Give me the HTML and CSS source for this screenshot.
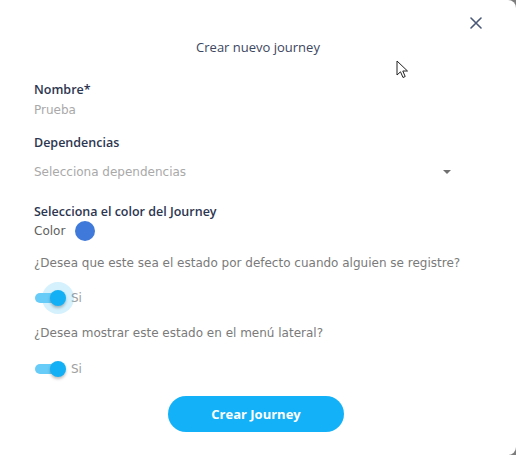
FILE: index.html
```html
<!DOCTYPE html>
<html lang="es">
<head>
<meta charset="utf-8">
<link rel="stylesheet" href="styles.css">
</head>
<body>
<div class="modal">
  <button class="close" aria-label="Cerrar">
    <svg width="12" height="12" viewBox="0 0 12 12"><path d="M1 1L11 11M11 1L1 11" stroke="#4a5878" stroke-width="1.6" stroke-linecap="round"/></svg>
  </button>
  <h1 class="title">Crear nuevo journey</h1>
  <form class="form">
    <div class="field">
      <div class="label">Nombre*</div>
      <div class="value">Prueba</div>
    </div>
    <div class="field field-dep">
      <div class="label">Dependencias</div>
      <div class="select">
        <span class="value">Selecciona dependencias</span>
        <span class="caret"></span>
      </div>
    </div>
    <div class="field field-color">
      <div class="label">Selecciona el color del Journey</div>
      <div class="color-row">
        <span class="color-text">Color</span>
        <span class="swatch"></span>
      </div>
    </div>
    <div class="question q1">¿Desea que este sea el estado por defecto cuando alguien se registre?</div>
    <div class="toggle-row">
      <span class="switch focused"><span class="track"></span><span class="thumb"></span></span>
      <span class="si">Si</span>
    </div>
    <div class="question q2">¿Desea mostrar este estado en el menú lateral?</div>
    <div class="toggle-row t2">
      <span class="switch"><span class="track"></span><span class="thumb"></span></span>
      <span class="si">Si</span>
    </div>
    <div class="actions">
      <button type="button" class="primary">Crear Journey</button>
    </div>
  </form>
  <svg class="cursor" width="14" height="20" viewBox="0 0 14 20"><path d="M1 1L1 15L4.5 11.8L7 17.5L9.2 16.5L6.8 11L11.5 11Z" fill="#fff" stroke="#222" stroke-width="1" stroke-linejoin="round"/></svg>
</div>
</body>
</html>
```
FILE: styles.css
```css
* { box-sizing: border-box; }
html, body { margin: 0; padding: 0; }
body {
  background: #7d7d7d;
  width: 516px;
  height: 455px;
  overflow: hidden;
  font-family: "DejaVu Sans", sans-serif;
}
.modal {
  position: relative;
  width: 516px;
  height: 455px;
  background: #fff;
  border-radius: 0 8px 8px 0;
  padding: 38px 34px 0 34px;
}
.close {
  position: absolute;
  top: 17px;
  right: 34px;
  width: 12px;
  height: 12px;
  padding: 0;
  border: 0;
  background: none;
  display: flex;
}
.title {
  margin: 0;
  text-align: center;
  font-family: "Open Sans", sans-serif;
  font-size: 13px;
  font-weight: 500;
  color: #3c4660;
  line-height: 18px;
}
.form { display: flex; flex-direction: column; margin-top: 26px; }
.label {
  font-family: "Open Sans", sans-serif;
  font-size: 12.5px;
  font-weight: 600;
  color: #2c3650;
  line-height: 16px;
}
.value {
  font-size: 12px;
  color: #a9a9a9;
  line-height: 16px;
  margin-top: 4px;
}
.field-dep { margin-top: 17px; }
.select {
  display: flex;
  align-items: center;
  justify-content: space-between;
  margin-top: 13px;
  padding-right: 31px;
}
.select .value { margin-top: 0; }
.caret {
  width: 0; height: 0;
  border-left: 4px solid transparent;
  border-right: 4px solid transparent;
  border-top: 4px solid #707070;
}
.field-color { margin-top: 24px; }
.color-row { display: flex; align-items: center; gap: 10px; margin-top: 1px; }
.color-text { font-size: 12px; color: #606060; line-height: 16px; }
.swatch { width: 20px; height: 20px; border-radius: 50%; background: #3f79da; }
.question {
  font-size: 12px;
  color: #7a7a7a;
  line-height: 16px;
}
.q1 { margin-top: 14px; }
.q2 { margin-top: 17px; }
.toggle-row { display: flex; align-items: center; height: 20px; margin-top: 17px; }
.t2 { margin-top: 18px; }
.switch { position: relative; width: 34px; height: 20px; margin-left: 1px; }
.track {
  position: absolute; left: 0; top: 5px;
  width: 28px; height: 10px; border-radius: 5px;
  background: #68ccf8;
}
.thumb {
  position: absolute; left: 15px; top: 2px;
  width: 16px; height: 16px; border-radius: 50%;
  background: #13b0f6;
  box-shadow: 0 2px 3px rgba(0,0,0,0.25);
}
.switch.focused::before {
  content: "";
  position: absolute; left: 7px; top: -6px;
  width: 32px; height: 32px; border-radius: 50%;
  background: rgba(19,176,246,0.18);
}
.si { font-size: 12px; color: #a0a0a0; margin-left: 2px; line-height: 16px; }
.actions { display: flex; justify-content: center; margin-top: 17px; padding-right: 4px; }
.primary {
  width: 176px;
  height: 36px;
  border: 0;
  border-radius: 18px;
  background: #13b1f7;
  color: #fff;
  font-family: "Open Sans", sans-serif;
  font-size: 13px;
  font-weight: 700;
}
.cursor { position: absolute; left: 396px; top: 60px; }
```
